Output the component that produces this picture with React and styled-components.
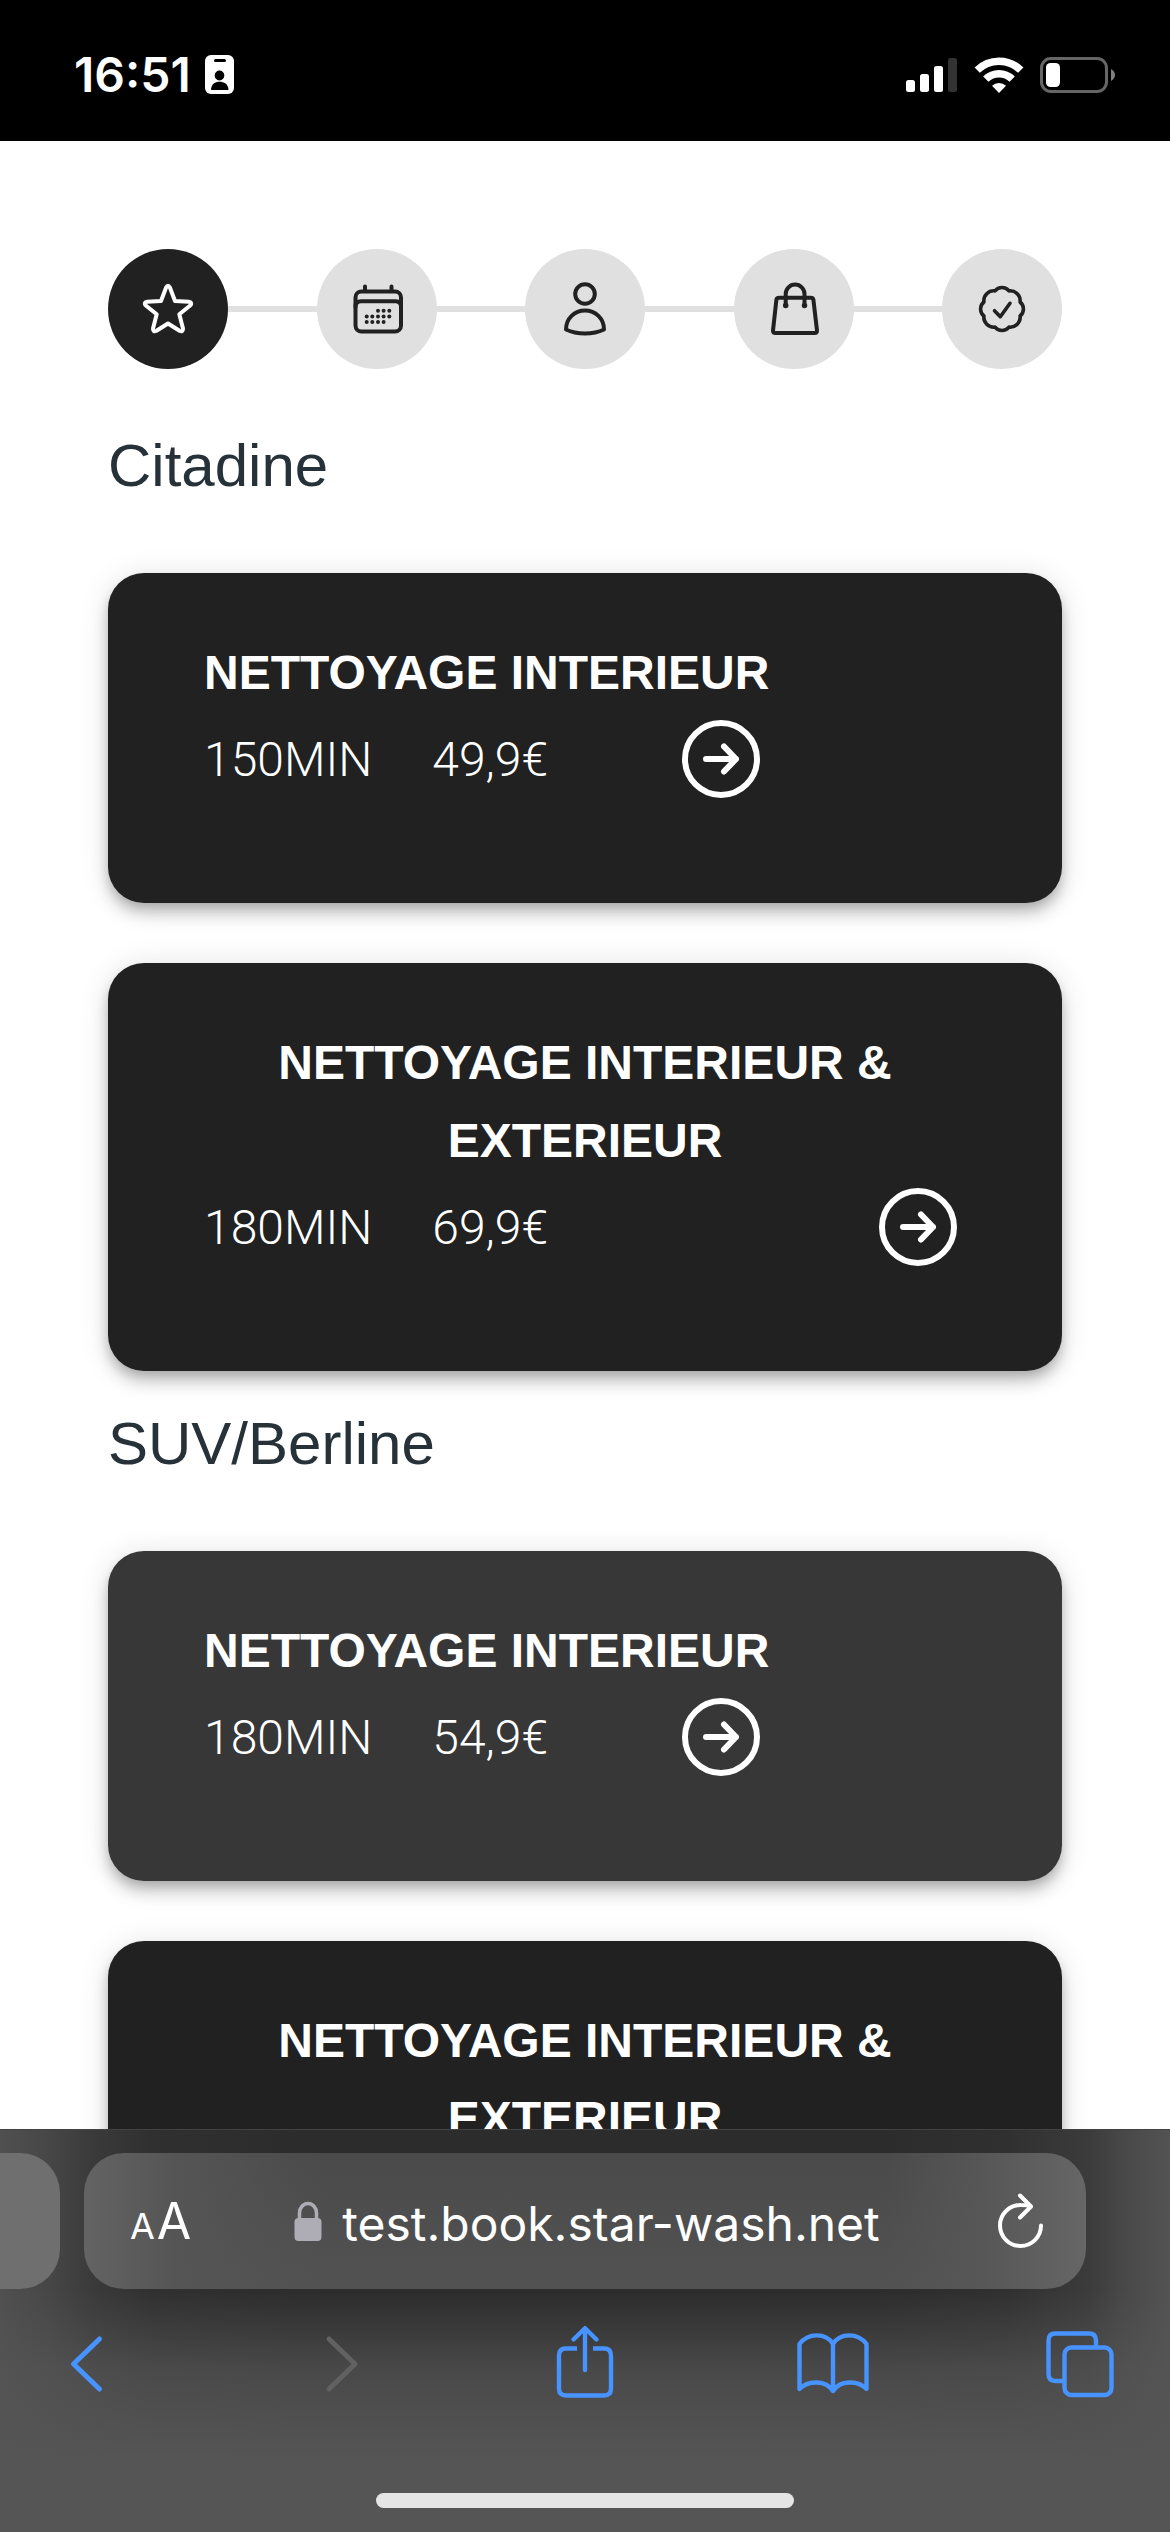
import React from "react";
import styled, { createGlobalStyle } from "styled-components";

const sans = `"Liberation Sans", Arial, sans-serif`;
const system = `Inter, "Liberation Sans", sans-serif`;

const GlobalStyle = createGlobalStyle`
  *, *::before, *::after { box-sizing: border-box; }
  html, body { margin: 0; background: #fff; }
  button, input { margin: 0; padding: 0; border: 0; background: none; font: inherit; color: inherit; }
  button { cursor: pointer; }
  svg { display: block; flex: none; }
`;

const Screen = styled.div`
  display: flex;
  flex-direction: column;
  height: 100vh;
  overflow: hidden;
  background: #fff;
`;

/* ---------- status bar ---------- */

const StatusBar = styled.header`
  flex: none;
  display: flex;
  align-items: center;
  justify-content: space-between;
  height: 141px;
  padding: 8px 54px 0 74px;
  background: #000;
  color: #fff;
`;

const StatusGroup = styled.div`
  display: flex;
  align-items: center;
  gap: ${(p) => p.$gap}px;
`;

const Clock = styled.time`
  font: 600 48px/56px ${system};
`;

/* ---------- page ---------- */

const Page = styled.main`
  flex: 1;
  min-height: 0;
  overflow: hidden;
  padding: 108px 108px 0;
  font-family: ${sans};
`;

const Steps = styled.ol`
  display: flex;
  align-items: center;
  margin: 0 0 24px;
  padding: 0;
  list-style: none;
`;

const Step = styled.li`
  display: flex;
  align-items: center;
  flex: ${(p) => (p.$first ? "none" : "1")};

  &::before {
    content: "";
    display: ${(p) => (p.$first ? "none" : "block")};
    flex: 1;
    height: 6px;
    background: #e0e0e0;
  }
`;

const StepButton = styled.button`
  display: grid;
  place-items: center;
  width: 120px;
  height: 120px;
  border-radius: 50%;
  background: ${(p) => (p.$active ? "#212121" : "#e0e0e0")};
  color: ${(p) => (p.$active ? "#fff" : "#212121")};
`;

const GroupTitle = styled.h2`
  margin: 0;
  padding: 28px 0 62px;
  font-size: 60px;
  font-weight: 400;
  line-height: 90px;
  color: #263238;
`;

const CardList = styled.div`
  display: grid;
  gap: 60px;
`;

const Card = styled.article`
  display: flex;
  padding: 61px 96px 95px;
  border-radius: 36px;
  background: ${(p) => (p.$hover ? "#373737" : "#212121")};
  color: #fff;
  box-shadow:
    0 6px 12px -3px rgba(0, 0, 0, 0.2),
    0 12px 15px rgba(0, 0, 0, 0.14),
    0 3px 30px rgba(0, 0, 0, 0.12);
`;

const CardBody = styled.div`
  display: flex;
  flex-direction: column;
`;

const CardTitle = styled.h3`
  margin: 0;
  font-size: 48px;
  font-weight: 700;
  line-height: 78px;
  text-align: center;
`;

const CardRow = styled.div`
  display: flex;
  align-items: center;
  gap: 60px;
  font: 300 48px/78px Roboto, ${sans};
`;

const GoButton = styled.button`
  margin-left: auto;
  padding: 8px 9px 10px;
`;

/* ---------- browser bar ---------- */

const BrowserBar = styled.footer`
  flex: none;
  display: flex;
  flex-direction: column;
  height: 403px;
  border-top: 1px solid #424242;
  background:
    linear-gradient(to bottom, rgba(85, 85, 85, 0) 160px, rgba(85, 85, 85, 0.7) 240px, #555 330px),
    linear-gradient(to right, #505050, #474747 4%, #3a3a3a 8%, #303030 13%, #2c2c2c 25%, #2c2c2c 75%, #303030 86%, #3b3b3b 93%, #484848 96%, #535353);
`;

const AddressRow = styled.div`
  display: grid;
  grid-template-columns: 60px 1fr 60px;
  gap: 24px;
  padding-top: 23px;
`;

const PreviousTab = styled.div`
  height: 136px;
  border-radius: 0 40px 40px 0;
  background: #6f6f6f;
`;

const AddressField = styled.div`
  display: grid;
  grid-template-columns: 60px 1fr 60px;
  align-items: center;
  height: 136px;
  padding: 0 42px 0 46px;
  border-radius: 40px;
  background:
    linear-gradient(to right, #636363, #555 9%, rgba(80, 80, 80, 0) 24%, rgba(80, 80, 80, 0) 80%, #575757 90%, #666),
    linear-gradient(to bottom, #4a4a4a, #525252);
  color: #fff;
  font-family: ${system};
`;

const TextSizeButton = styled.button`
  display: flex;
  align-items: baseline;
  gap: 2px;
  padding-top: 4px;
  line-height: 60px;
`;

const Letter = styled.span`
  font-size: ${(p) => (p.$large ? 50 : 36)}px;
`;

const AddressLabel = styled.label`
  display: flex;
  justify-content: center;
  align-items: center;
  gap: 20px;
  min-width: 0;
`;

const AddressInput = styled.input`
  field-sizing: content;
  height: 64px;
  padding-top: 4px;
  font-size: 48px;
  line-height: 60px;
  outline: 0;
`;

const ReloadButton = styled.button`
  justify-self: end;
`;

const Toolbar = styled.nav`
  display: flex;
  align-items: center;
  justify-content: space-between;
  padding: 35px 50px 0;
`;

const ToolButton = styled.button`
  color: #4793ff;

  &:disabled { color: #616161; }
`;

const HomeIndicator = styled.div`
  width: 418px;
  height: 15px;
  margin: auto auto 24px;
  border-radius: 8px;
  background: #e5e5e5;
`;

/* ---------- icons ---------- */

const Stroke = ({ w = 60, h = 60, sw = 4, children }) => (
  <svg width={w} height={h} viewBox={`0 0 ${w} ${h}`} fill="none" stroke="currentColor" strokeWidth={sw} strokeLinecap="round" strokeLinejoin="round" aria-hidden="true">
    {children}
  </svg>
);

const StarIcon = () => (
  <Stroke>
    <path d="M28.1 8.5Q30 5.2 31.9 8.5L37 22L51 22.7Q54.700 23.500 52.200 26.500L41.300 35.200L45 49.500Q45 53.500 41.500 51.800L30 44.500L18.500 51.800Q15 53.500 15 49.500L18.700 35.200L7.800 26.500Q5.300 23.500 9 22.700L23 22Z" />
  </Stroke>
);

const dots = [
  [31, 31.7], [36.6, 31.7], [42.3, 31.7],
  [19.7, 37.4], [25.3, 37.4], [31, 37.4], [36.6, 37.4], [42.3, 37.4],
  [19.7, 43], [25.3, 43], [31, 43], [36.6, 43],
];

const CalendarIcon = () => (
  <Stroke>
    <rect x="8.500" y="12.500" width="45.500" height="40" rx="6" />
    <path d="M8.500 28Q8.500 22.300 14 22.300H48.500Q54 22.300 54 28M18 7.500V12M44.500 7.500V12" />
    <g fill="currentColor" stroke="none">
      {dots.map(([x, y]) => <circle key={`${x}-${y}`} cx={x} cy={y} r="2" />)}
    </g>
  </Stroke>
);

const PersonIcon = () => (
  <Stroke>
    <circle cx="30" cy="15" r="9.800" />
    <path d="M11 50.500C11 39.500 19.500 31.500 30 31.500S49 39.500 49 50.500C38 55.800 22 55.800 11 50.500Z" />
  </Stroke>
);

const BagIcon = () => (
  <Stroke>
    <path d="M15.200 18.700H46.800Q49.200 18.700 49.400 20.700L53 51.500Q53 54 50.500 54H11.500Q9 54 9 51.500L12.400 20.700Q12.700 18.700 15.200 18.700ZM21.700 26V15a9.400 9.400 0 0 1 18.800 0V26" />
    <circle cx="21.700" cy="26.500" r="1.500" fill="currentColor" strokeWidth="2.500" />
    <circle cx="40.500" cy="26.500" r="1.500" fill="currentColor" strokeWidth="2.500" />
  </Stroke>
);

const BadgeIcon = () => (
  <Stroke sw={3.6}>
    <path d="M23 11.900A9 9 0 0 1 37 11.900A10 10 0 0 1 48.100 23A9 9 0 0 1 48.100 37A10 10 0 0 1 37 48.100A9 9 0 0 1 23 48.100A10 10 0 0 1 11.900 37A9 9 0 0 1 11.900 23A10 10 0 0 1 23 11.900Z" />
    <path d="M22.500 31.700L28.300 37.700L38 24.300" />
  </Stroke>
);

const GoIcon = () => (
  <Stroke w={78} h={78} sw={6}>
    <circle cx="39" cy="39" r="36" />
    <path d="M24 39H54M42 26.500L54 39L42 51.500" />
  </Stroke>
);

const IdIcon = () => (
  <svg width="29" height="39" viewBox="0 0 29 39" aria-hidden="true">
    <rect width="29" height="39" rx="6" fill="#fff" />
    <rect x="9" y="4" width="12" height="3" rx="1.500" />
    <ellipse cx="14.500" cy="20.500" rx="4.800" ry="5" />
    <path d="M6 34.500C6.500 29 10 26.800 14.500 26.800S23 29 23.500 34.500Q23.500 35 22.500 35H7Q6 35 6 34.500Z" />
  </svg>
);

const SignalIcon = () => (
  <svg width="52" height="34" viewBox="0 0 52 34" fill="#fff" aria-hidden="true">
    <rect y="22" width="9" height="12" rx="2.500" />
    <rect x="14" y="16" width="9" height="18" rx="2.500" />
    <rect x="28" y="8" width="9" height="26" rx="2.500" />
    <rect x="42" width="9" height="34" rx="2.500" fill="#333" />
  </svg>
);

const WifiIcon = () => (
  <svg width="50" height="36" viewBox="0 0 50 36" fill="none" stroke="#fff" strokeWidth="7.500" aria-hidden="true">
    <path d="M3.200 13.200A31 31 0 0 1 46.800 13.200" />
    <path d="M11.800 22.200A18.600 18.600 0 0 1 38.200 22.200" />
    <path d="M25 36L18 28.800A10 10 0 0 1 32 28.800Z" fill="#fff" stroke="none" />
  </svg>
);

const BatteryIcon = () => (
  <svg width="76" height="36" viewBox="0 0 76 36" aria-hidden="true">
    <rect x="1.500" y="1.500" width="65" height="33" rx="9.500" fill="none" stroke="#666" strokeWidth="3" />
    <rect x="6" y="6" width="14" height="24" rx="4.500" fill="#fff" />
    <path d="M71 12Q75 14.500 75 18T71 24Z" fill="#808080" />
  </svg>
);

const LockIcon = () => (
  <svg width="28" height="40" viewBox="0 0 28 40" aria-hidden="true">
    <rect x="0.500" y="17" width="27" height="23" rx="4" fill="#aeacb4" />
    <path d="M5.500 19V12a8.500 9.500 0 0 1 17 0V19" fill="none" stroke="#aeacb4" strokeWidth="3.500" />
  </svg>
);

const ReloadIcon = () => (
  <Stroke w={46} h={56} sw={4}>
    <path d="M22 2.500L33 13.500L22 24.500M33 13.500C31 12.500 27 12 23 12A20.500 20.500 0 1 0 43 32.500" />
  </Stroke>
);

const BackIcon = () => (
  <Stroke w={80} h={80} sw={5}>
    <path d="M49.500 15L23.500 40L49.500 65" />
  </Stroke>
);

const ForwardIcon = () => (
  <Stroke w={80} h={80} sw={5}>
    <path d="M31 15L57 40L31 65" />
  </Stroke>
);

const ShareIcon = () => (
  <Stroke w={80} h={80} sw={4.4}>
    <path d="M32 24.500H21Q14 24.500 14 31.500V64.500Q14 71.500 21 71.500H59Q66 71.500 66 64.500V31.500Q66 24.500 59 24.500H48" strokeLinecap="butt" />
    <path d="M40 46V5M28.500 15.500L40 4.200L51.500 15.500" />
  </Stroke>
);

const BookIcon = () => (
  <Stroke w={80} h={80} sw={4.4}>
    <path d="M40 67V20C33 8.500 15 8.500 6.500 20V65C15 56 33 56 40 67C47 56 65 56 73.500 65V20C65 8.500 47 8.500 40 20" />
  </Stroke>
);

const TabsIcon = () => (
  <Stroke w={80} h={80} sw={4.4}>
    <rect x="24.500" y="23.500" width="47" height="47.500" rx="7" />
    <path d="M56 23V16.500Q56 9.500 49 9.500H15.500Q8.500 9.500 8.500 16.500V50Q8.500 57 15.500 57H24" strokeLinecap="butt" />
  </Stroke>
);

/* ---------- data ---------- */

const steps = [
  { label: "Prestation", Icon: StarIcon },
  { label: "Date", Icon: CalendarIcon },
  { label: "Client", Icon: PersonIcon },
  { label: "Panier", Icon: BagIcon },
  { label: "Confirmation", Icon: BadgeIcon },
];

const groups = [
  {
    title: "Citadine",
    services: [
      { name: "NETTOYAGE INTERIEUR", duration: "150MIN", price: "49,9€" },
      { name: "NETTOYAGE INTERIEUR & EXTERIEUR", duration: "180MIN", price: "69,9€" },
    ],
  },
  {
    title: "SUV/Berline",
    services: [
      { name: "NETTOYAGE INTERIEUR", duration: "180MIN", price: "54,9€", hover: true },
      { name: "NETTOYAGE INTERIEUR & EXTERIEUR", duration: "", price: "" },
    ],
  },
];

function ServiceCard({ name, duration, price, hover }) {
  return (
    <Card $hover={hover}>
      <CardBody>
        <CardTitle>{name}</CardTitle>
        <CardRow>
          <span>{duration}</span>
          <span>{price}</span>
          <GoButton type="button" aria-label={name}>
            <GoIcon />
          </GoButton>
        </CardRow>
      </CardBody>
    </Card>
  );
}

export default function App() {
  return (
    <Screen>
      <GlobalStyle />
      <StatusBar>
        <StatusGroup $gap={14}>
          <Clock>16:51</Clock>
          <IdIcon />
        </StatusGroup>
        <StatusGroup $gap={16}>
          <SignalIcon />
          <WifiIcon />
          <BatteryIcon />
        </StatusGroup>
      </StatusBar>

      <Page>
        <Steps>
          {steps.map(({ label, Icon }, i) => (
            <Step key={label} $first={i === 0}>
              <StepButton type="button" aria-label={label} $active={i === 0}>
                <Icon />
              </StepButton>
            </Step>
          ))}
        </Steps>
        {groups.map((group) => (
          <section key={group.title}>
            <GroupTitle>{group.title}</GroupTitle>
            <CardList>
              {group.services.map((s) => <ServiceCard key={s.name} {...s} />)}
            </CardList>
          </section>
        ))}
      </Page>

      <BrowserBar>
        <AddressRow>
          <PreviousTab />
          <AddressField>
            <TextSizeButton type="button" aria-label="Taille du texte">
              <Letter>A</Letter>
              <Letter $large>A</Letter>
            </TextSizeButton>
            <AddressLabel>
              <LockIcon />
              <AddressInput type="text" aria-label="Adresse" defaultValue="test.book.star-wash.net" />
            </AddressLabel>
            <ReloadButton type="button" aria-label="Recharger">
              <ReloadIcon />
            </ReloadButton>
          </AddressField>
        </AddressRow>
        <Toolbar>
          <ToolButton type="button" aria-label="Retour"><BackIcon /></ToolButton>
          <ToolButton type="button" aria-label="Suivant" disabled><ForwardIcon /></ToolButton>
          <ToolButton type="button" aria-label="Partager"><ShareIcon /></ToolButton>
          <ToolButton type="button" aria-label="Signets"><BookIcon /></ToolButton>
          <ToolButton type="button" aria-label="Onglets"><TabsIcon /></ToolButton>
        </Toolbar>
        <HomeIndicator />
      </BrowserBar>
    </Screen>
  );
}
